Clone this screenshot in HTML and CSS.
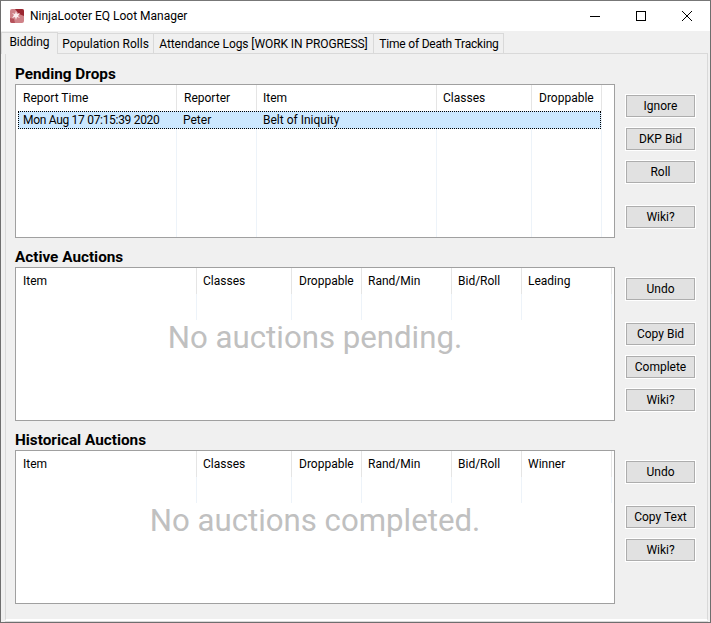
FILE: index.html
```html
<!DOCTYPE html>
<html lang="en">
<head>
  <meta charset="UTF-8">
  <meta name="viewport" content="width=device-width, initial-scale=1.0">
  <title>NinjaLooter EQ Loot Manager</title>
  <link rel="stylesheet" href="styles.css">
</head>
<body>
  <div class="window">
    <header class="titlebar">
      <svg class="app-icon" width="14" height="14" viewBox="0 0 14 14">
        <rect width="14" height="14" rx="2" fill="#cf8288"/>
        <path d="M5 0h7a2 2 0 0 1 2 2v5l-5-2z" fill="#9a2630"/>
        <path d="M0 9l4 1 1 4H2a2 2 0 0 1-2-2z" fill="#b5515a"/>
        <path d="M2 4l3 1 1-3 1 3 3-1-2 3 2 2-3-1-1 3-1-3-3 1 2-3z" fill="#fbeeee"/>
      </svg>
      <span class="app-title">NinjaLooter EQ Loot Manager</span>
      <div class="win-controls">
        <svg width="12" height="12" viewBox="0 0 12 12"><path d="M1 6.5h10" stroke="#000" fill="none"/></svg>
        <svg width="12" height="12" viewBox="0 0 12 12"><rect x="1.5" y="1.5" width="9" height="9" stroke="#000" fill="none"/></svg>
        <svg width="12" height="12" viewBox="0 0 12 12"><path d="M1 1l10 10M11 1L1 11" stroke="#000" fill="none"/></svg>
      </div>
    </header>

    <nav class="tabs">
      <a class="tab active t-bidding">Bidding</a>
      <a class="tab t-pop">Population Rolls</a>
      <a class="tab t-att">Attendance Logs [WORK IN PROGRESS]</a>
      <a class="tab t-tod">Time of Death Tracking</a>
    </nav>

    <main class="panel">
      <section class="section">
        <h2>Pending Drops</h2>
        <div class="section-body">
          <div class="list pending">
            <div class="col w-162"><div class="head">Report Time</div></div>
            <div class="col w-80"><div class="head">Reporter</div></div>
            <div class="col w-180"><div class="head tight">Item</div></div>
            <div class="col w-95"><div class="head tight">Classes</div></div>
            <div class="col w-70"><div class="head">Droppable</div></div>
            <div class="row">
              <span class="cell-date">Mon Aug 17 07:15:39 2020</span>
              <span class="cell-reporter">Peter</span>
              <span class="cell-item">Belt of Iniquity</span>
            </div>
          </div>
          <div class="buttons">
            <button>Ignore</button>
            <button>DKP Bid</button>
            <button>Roll</button>
            <button class="spaced">Wiki?</button>
          </div>
        </div>
      </section>

      <section class="section">
        <h2>Active Auctions</h2>
        <div class="section-body">
          <div class="list short">
            <div class="col w-182"><div class="head">Item</div></div>
            <div class="col w-95"><div class="head tight">Classes</div></div>
            <div class="col w-70"><div class="head">Droppable</div></div>
            <div class="col w-90"><div class="head tight">Rand/Min</div></div>
            <div class="col w-70"><div class="head tight">Bid/Roll</div></div>
            <div class="col w-90"><div class="head tight">Leading</div></div>
            <p class="empty">No auctions pending.</p>
          </div>
          <div class="buttons">
            <button>Undo</button>
            <button class="spaced">Copy Bid</button>
            <button>Complete</button>
            <button>Wiki?</button>
          </div>
        </div>
      </section>

      <section class="section">
        <h2>Historical Auctions</h2>
        <div class="section-body">
          <div class="list short">
            <div class="col w-182"><div class="head">Item</div></div>
            <div class="col w-95"><div class="head tight">Classes</div></div>
            <div class="col w-70"><div class="head">Droppable</div></div>
            <div class="col w-90"><div class="head tight">Rand/Min</div></div>
            <div class="col w-70"><div class="head tight">Bid/Roll</div></div>
            <div class="col w-90"><div class="head tight">Winner</div></div>
            <p class="empty">No auctions completed.</p>
          </div>
          <div class="buttons">
            <button>Undo</button>
            <button class="spaced">Copy Text</button>
            <button>Wiki?</button>
          </div>
        </div>
      </section>
    </main>
  </div>
</body>
</html>
```

FILE: styles.css
```css
* {
  box-sizing: border-box;
}
body {
  margin: 0;
  font-family: Roboto, Arial, sans-serif;
  font-size: 12px;
  color: #000;
  background: #fff;
}
.window {
  width: 711px;
  height: 623px;
  border: 1px solid #6e6e6e;
  border-top-color: #777;
  background: #f0f0f0;
  display: flex;
  flex-direction: column;
  overflow: hidden;
}
.titlebar {
  height: 30px;
  flex: none;
  background: #fff;
  display: flex;
  align-items: center;
  padding-left: 9px;
}
.app-icon {
  margin-right: 6px;
}
.win-controls {
  margin-left: auto;
  display: flex;
  gap: 34px;
  padding-right: 17px;
}
.tabs {
  height: 22px;
  flex: none;
  display: flex;
  align-items: flex-end;
}
.tab {
  height: 20px;
  line-height: 20px;
  text-align: center;
  border: 1px solid #d9d9d9;
  border-left: 0;
  border-bottom: 0;
}
.tab.active {
  height: 22px;
  line-height: 19px;
  border-left: 1px solid #d9d9d9;
  position: relative;
  top: 1px;
  z-index: 1;
  background: #f0f0f0;
}
.t-bidding { width: 57px; }
.t-pop { width: 96px; }
.t-att { width: 220px; letter-spacing: -0.08px; }
.t-tod { width: 130px; letter-spacing: -0.2px; padding-left: 1px; }
.panel {
  flex: 1;
  margin: 0 2px 1px 4px;
  padding: 10px 0 0 9px;
  border: 1px solid #d9d9d9;
  border-bottom: 2px solid #fff;
  box-shadow: 0 1px 0 #d9d9d9;
}
.section {
  height: 183px;
}
.section h2 {
  margin: 0;
  height: 20px;
  font-size: 15.3px;
  line-height: 20px;
  font-weight: 700;
}
.section-body {
  display: flex;
}
.list {
  width: 600px;
  height: 154px;
  background: #fff;
  border: 1px solid #a0a0a0;
  display: flex;
  align-items: flex-start;
  position: relative;
}
.col {
  height: 100%;
  flex: none;
  border-right: 1px solid #edf3f9;
}
.short .col {
  height: 52px;
}
.head {
  height: 26px;
  padding: 5px 0 0 7px;
  line-height: 16px;
  border-right: 1px solid #e5e5e5;
  margin-right: -1px;
}
.head.tight {
  padding-left: 6px;
}
.w-162 { width: 161px; }
.w-80 { width: 80px; }
.w-180 { width: 180px; }
.w-95 { width: 95px; }
.w-70 { width: 70px; }
.w-182 { width: 181px; }
.w-90 { width: 90px; }
.row {
  position: absolute;
  left: 2px;
  top: 26px;
  width: 583px;
  height: 18px;
  background: #cce8ff;
  border: 1px dotted #000;
  display: flex;
  line-height: 16px;
}
.row span {
  flex: none;
}
.cell-date {
  width: 164px;
  padding-left: 4px;
  letter-spacing: -0.3px;
}
.cell-reporter {
  width: 80px;
}
.cell-item {
  width: 180px;
}
.empty {
  position: absolute;
  left: 0;
  right: 0;
  top: 50px;
  margin: 0;
  text-align: center;
  font-size: 31.2px;
  line-height: 40px;
  color: #c0c0c0;
}
.buttons {
  display: flex;
  flex-direction: column;
  gap: 11px;
  padding: 11px 0 0 11px;
}
.buttons .spaced {
  margin-top: 12px;
}
button {
  width: 69px;
  height: 22px;
  padding: 0 0 1px;
  font: inherit;
  color: #000;
  background: #e1e1e1;
  border: 1px solid #adadad;
  outline: 1px solid #fff;
}
```
